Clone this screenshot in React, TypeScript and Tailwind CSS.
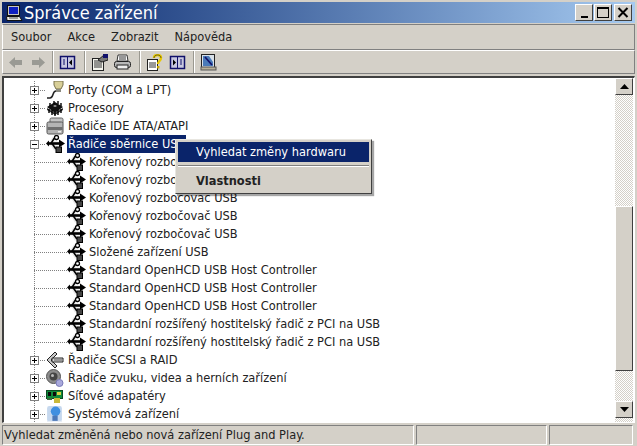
import type { ReactNode } from 'react';

type RowKind = 'port' | 'cpu' | 'ide' | 'usb' | 'scsi' | 'sound' | 'net' | 'sys';

const TOP_BEFORE: { kind: RowKind; label: string }[] = [
    { kind: 'port', label: 'Porty (COM a LPT)' },
    { kind: 'cpu', label: 'Procesory' },
    { kind: 'ide', label: 'Řadiče IDE ATA/ATAPI' },
];

const USB_CHILDREN = [
    'Kořenový rozbočovač USB',
    'Kořenový rozbočovač USB',
    'Kořenový rozbočovač USB',
    'Kořenový rozbočovač USB',
    'Kořenový rozbočovač USB',
    'Složené zařízení USB',
    'Standard OpenHCD USB Host Controller',
    'Standard OpenHCD USB Host Controller',
    'Standard OpenHCD USB Host Controller',
    'Standardní rozšířený hostitelský řadič z PCI na USB',
    'Standardní rozšířený hostitelský řadič z PCI na USB',
];

const TOP_AFTER: { kind: RowKind; label: string }[] = [
    { kind: 'scsi', label: 'Řadiče SCSI a RAID' },
    { kind: 'sound', label: 'Řadiče zvuku, videa a herních zařízení' },
    { kind: 'net', label: 'Síťové adapatéry' },
    { kind: 'sys', label: 'Systémová zařízení' },
];

function UsbIcon() {
    return (
        <svg width="19" height="18" viewBox="0 0 19 18" className="shrink-0">
            <path d="M1 8.5h4l3-5h3M5 8.5h10M6 8.5l3 5h3" fill="none" stroke="#e8e8e8" strokeWidth="4" />
            <path d="M2 8.5h12" stroke="#000" strokeWidth="2.6" />
            <path d="M5 8.5l3-5h2M6 8.5l3.5 5H12" fill="none" stroke="#000" strokeWidth="1.6" />
            <path d="M13 4.5l6 4-6 4z" fill="#000" />
            <path d="M0 8.5l3-3v6z" fill="#000" />
            <circle cx="10.5" cy="2.5" r="2" fill="#fff" stroke="#000" strokeWidth="1.3" />
            <rect x="10" y="12" width="5.5" height="5.5" fill="#444" stroke="#000" />
        </svg>
    );
}

function DeviceIcon({ kind }: { kind: RowKind }) {
    if (kind === 'usb') return <UsbIcon />;
    if (kind === 'port') {
        return (
            <svg width="18" height="18" viewBox="0 0 18 18" className="shrink-0">
                <path d="M1 17h3c4 0 2-7 6-7h2" fill="none" stroke="#222" strokeWidth="1.5" />
                <path d="M8 0h9v4l-2 4h-5L8 4z" fill="#d8cf98" stroke="#77714c" />
                <rect x="10" y="8" width="5" height="3" fill="#8a8a80" />
            </svg>
        );
    }
    if (kind === 'cpu') {
        return (
            <svg width="18" height="16" viewBox="0 0 18 16" className="shrink-0">
                <path d="M1 7l8-5 8 5-8 6z" fill="#111" />
                <path d="M1 8l8 5 8-5v2l-8 5-8-5z" fill="#333" />
                <path d="M3 9v4M6 10v5M9 12v4M12 10v5M15 9v4M4 3v3M8 1v3M12 1v3M15 3v3" stroke="#000" strokeWidth="1.4" />
                <path d="M7 6l2-1 2 1-2 1z" fill="#aaa" />
            </svg>
        );
    }
    if (kind === 'ide') {
        return (
            <svg width="18" height="18" viewBox="0 0 18 18" className="shrink-0">
                <rect x="4" y="1" width="13" height="6" rx="1.5" fill="#c4c4c4" stroke="#666" />
                <rect x="1" y="5" width="16" height="12" rx="1.5" fill="#b4b4b4" stroke="#555" />
                <rect x="1.5" y="10" width="15" height="3" fill="#6f6f6f" />
                <rect x="12" y="14" width="3" height="1.5" fill="#eee" />
            </svg>
        );
    }
    if (kind === 'scsi') {
        return (
            <svg width="18" height="18" viewBox="0 0 18 18" className="shrink-0">
                <path d="M9 1L1 9l8 8 2-2-6-6 6-6z" fill="#c8c8c8" stroke="#222" />
                <path d="M6 7h11v4H6z" fill="#d8d8d8" stroke="#222" />
                <path d="M8 9h8" stroke="#555" />
            </svg>
        );
    }
    if (kind === 'sound') {
        return (
            <svg width="18" height="18" viewBox="0 0 18 18" className="shrink-0">
                <circle cx="7.5" cy="7.5" r="7" fill="#8c8c8c" stroke="#555" />
                <circle cx="7.5" cy="7.5" r="4" fill="#444" />
                <circle cx="6.5" cy="6.5" r="1.5" fill="#bbb" />
                <circle cx="13.5" cy="14" r="3.5" fill="#a9a9dc" stroke="#7a7ab8" />
            </svg>
        );
    }
    if (kind === 'net') {
        return (
            <svg width="18" height="15" viewBox="0 0 18 15" className="shrink-0">
                <rect x="0.5" y="1.5" width="16" height="8" fill="#0e8a3a" stroke="#0a4a20" />
                <path d="M2 3h3v4H2zM7 3h3v4H7z" fill="#0a0a0a" />
                <rect x="11" y="3" width="4" height="3" fill="#d8d040" />
                <rect x="8" y="9" width="6" height="5" fill="#c9b93a" />
                <rect x="1" y="9" width="5" height="2" fill="#3a6a3a" />
            </svg>
        );
    }
    return (
        <svg width="17" height="18" viewBox="0 0 16 17" className="shrink-0">
            <rect x="1" y="1" width="14" height="15" rx="2" fill="#c6d8ee" />
            <circle cx="9" cy="6" r="4.5" fill="#3f8fe0" />
            <path d="M6 10h5v6H6z" fill="#4b78b8" />
            <path d="M1 15h14v1.5H1z" fill="#e8eef6" />
        </svg>
    );
}

// dotted tree lines plus the +/- box
function TreeGutter({ width, expander }: { width: number; expander?: '+' | '-' }) {
    return (
        <svg width={width} height="18" viewBox={`0 0 ${width} 18`} className="shrink-0">
            <path d="M30.5 0V18" stroke="#808080" strokeDasharray="1 1" />
            <path d={`M30 9.5H${width}`} stroke="#808080" strokeDasharray="1 1" />
            {expander && (
                <g>
                    <rect x="26.5" y="5.5" width="8" height="8" fill="#fff" stroke="#808080" />
                    <path d="M28 9.5h5" stroke="#000" />
                    {expander === '+' && <path d="M30.5 7v5" stroke="#000" />}
                </g>
            )}
        </svg>
    );
}

function TreeRow({ gutter, expander, icon, children }: { gutter: number; expander?: '+' | '-'; icon: ReactNode; children: ReactNode }) {
    return (
        <div className="flex h-[18px] shrink-0 items-center">
            <TreeGutter width={gutter} expander={expander} />
            <div className="flex w-[21px] shrink-0 items-center">{icon}</div>
            {children}
        </div>
    );
}

function TitleButton({ children }: { children: ReactNode }) {
    return (
        <div className="flex h-[17px] w-[18px] items-center justify-center border border-t-white border-l-white border-r-[#404040] border-b-[#404040] bg-[#d4d0c8]">
            {children}
        </div>
    );
}

function ToolSep() {
    return <div className="ml-[7px] mr-[5px] h-[22px] w-[2px] shrink-0 border-r border-r-white bg-[#9a9890]" />;
}

function ToolIcon({ children }: { children: ReactNode }) {
    return (
        <svg width="17" height="17" viewBox="0 0 17 17" className="shrink-0">
            {children}
        </svg>
    );
}

function ScrollButton({ children }: { children: ReactNode }) {
    return (
        <div className="flex h-[17px] w-[18px] shrink-0 items-center justify-center border border-t-white border-l-white border-r-[#404040] border-b-[#404040] bg-[#d4d0c8]">
            {children}
        </div>
    );
}

export default function App() {
    return (
        <div
            className="relative flex h-[446px] w-[637px] flex-col overflow-hidden bg-[#d4d0c8] pt-[2px] text-[12.7px] text-[#222]"
            style={{ fontFamily: '"DejaVu Sans Condensed", "DejaVu Sans", sans-serif' }}
        >
            {/* title bar */}
            <div className="mx-[2px] flex h-[21px] shrink-0 items-center bg-gradient-to-r from-[#0a246a] to-[#a6caf0] pl-[3px] pr-[3px]">
                <svg width="18" height="18" viewBox="0 0 18 18" className="shrink-0">
                    <rect x="2.5" y="1.5" width="12" height="10" fill="#c8c8c0" stroke="#111" />
                    <rect x="4" y="3" width="9" height="7" fill="#1020c0" />
                    <path d="M1.5 12.5h13l2.5 4H2z" fill="#e8e8e0" stroke="#111" />
                    <path d="M4 14h9" stroke="#555" />
                </svg>
                <span className="ml-px text-[18px] leading-none text-white">Správce zařízení</span>
                <div className="ml-auto flex items-center">
                    <TitleButton>
                        <div className="mt-[8px] h-[2px] w-[7px] bg-black" />
                    </TitleButton>
                    <div className="ml-px">
                        <TitleButton>
                            <div className="h-[11px] w-[12px] border border-t-2 border-black" />
                        </TitleButton>
                    </div>
                    <div className="ml-[2px]">
                        <TitleButton>
                            <svg width="12" height="11" viewBox="0 0 12 11">
                                <path d="M1.5 1l9 9M10.5 1l-9 9" stroke="#000" strokeWidth="2" />
                            </svg>
                        </TitleButton>
                    </div>
                </div>
            </div>

            {/* menu bar */}
            <div className="mx-[2px] mt-px flex h-[26px] shrink-0 items-center gap-[16px] border border-t-[#808080] border-l-white border-r-[#808080] border-b-[#808080] pl-[8px]">
                <span>Soubor</span>
                <span>Akce</span>
                <span>Zobrazit</span>
                <span>Nápověda</span>
            </div>

            {/* toolbar */}
            <div className="mx-[2px] flex h-[24px] shrink-0 items-center border-t border-t-white border-r border-r-[#808080] border-b border-b-[#808080] border-l border-l-white pl-[6px]">
                <svg width="13" height="11" viewBox="0 0 13 11" className="shrink-0">
                    <path d="M0 5.5L6 0v3h7v5H6v3z" fill="#9a9a94" />
                </svg>
                <svg width="13" height="11" viewBox="0 0 13 11" className="ml-[10px] shrink-0">
                    <path d="M13 5.5L7 0v3H0v5h7v3z" fill="#9a9a94" />
                </svg>
                <ToolSep />
                <ToolIcon>
                    <rect x="1.5" y="2.5" width="14" height="12" fill="#c8c8e0" stroke="#10106a" strokeWidth="1.5" />
                    <path d="M8.5 3v11" stroke="#10106a" />
                    <path d="M4 6h2M4 8h2M4 10h2" stroke="#10106a" />
                    <path d="M13 5.5v6l-3-3z" fill="#000" />
                </ToolIcon>
                <div className="w-px shrink-0" />
                <ToolSep />
                <ToolIcon>
                    <rect x="1.5" y="4.5" width="11" height="12" fill="#f4f4ec" stroke="#222" />
                    <path d="M3 7h8M3 9h8M3 11h8M3 13h8" stroke="#333" />
                    <path d="M7 6l6-5 4 0v5l-6 2z" fill="#777" stroke="#222" />
                    <rect x="12" y="0" width="5" height="4" fill="#10106a" />
                </ToolIcon>
                <div className="w-[6px] shrink-0" />
                <ToolIcon>
                    <path d="M4 1h9l1 6H3z" fill="#fff" stroke="#333" />
                    <rect x="0.5" y="7.5" width="16" height="6" rx="2" fill="#b8b8b8" stroke="#222" />
                    <rect x="3" y="11" width="11" height="4" fill="#eee" stroke="#222" />
                    <path d="M5 3h7M5 5h7" stroke="#333" />
                </ToolIcon>
                <div className="w-px shrink-0" />
                <ToolSep />
                <ToolIcon>
                    <rect x="1.5" y="5.5" width="10" height="11" fill="#fff" stroke="#222" />
                    <path d="M3 9h7M3 11h7M3 13h7" stroke="#333" />
                    <path d="M8 4c0-4 7-4 7 0 0 3-3 3-3 6" fill="none" stroke="#e8c800" strokeWidth="2.4" />
                    <path d="M8 4c0-4 7-4 7 0" fill="none" stroke="#222" strokeWidth="0.6" />
                    <rect x="11" y="12" width="2.4" height="2.4" fill="#c8a800" />
                </ToolIcon>
                <div className="w-[6px] shrink-0" />
                <ToolIcon>
                    <rect x="1.5" y="2.5" width="14" height="12" fill="#c8c8e0" stroke="#10106a" strokeWidth="1.5" />
                    <path d="M8.5 3v11" stroke="#10106a" />
                    <path d="M11 6h2M11 8h2M11 10h2" stroke="#10106a" />
                    <path d="M4 5.5v6l3-3z" fill="#000" />
                </ToolIcon>
                <ToolSep />
                <ToolIcon>
                    <rect x="1.5" y="0.5" width="13" height="13" fill="#d8e0e8" stroke="#222" />
                    <path d="M3 2h6l4 6v4H3z" fill="#4a7ab8" />
                    <path d="M5 3l7 8" stroke="#10106a" strokeWidth="1.6" />
                    <rect x="1" y="13" width="15" height="3" fill="#b8b098" stroke="#555" />
                </ToolIcon>
            </div>

            {/* tree + scrollbar */}
            <div className="mx-[2px] mt-[2px] flex min-h-0 flex-1 border border-t-2 border-t-[#404040] border-l-2 border-l-[#404040] border-r-white border-b-white bg-white">
                <div className="min-w-0 flex-1 overflow-hidden pt-[3px]">
                    {TOP_BEFORE.map((row) => (
                        <TreeRow key={row.label} gutter={42} expander="+" icon={<DeviceIcon kind={row.kind} />}>
                            <span className="pl-px">{row.label}</span>
                        </TreeRow>
                    ))}
                    <TreeRow gutter={42} expander="-" icon={<DeviceIcon kind="usb" />}>
                        <span className="bg-[#0a246a] px-px leading-[18px] text-white">Řadiče sběrnice USB</span>
                    </TreeRow>
                    {USB_CHILDREN.map((label, i) => (
                        <TreeRow key={i} gutter={63} icon={<UsbIcon />}>
                            <span className="whitespace-nowrap pl-px">{label}</span>
                        </TreeRow>
                    ))}
                    {TOP_AFTER.map((row) => (
                        <TreeRow key={row.label} gutter={42} expander="+" icon={<DeviceIcon kind={row.kind} />}>
                            <span className="pl-px">{row.label}</span>
                        </TreeRow>
                    ))}
                </div>
                <div className="mr-px flex w-[18px] shrink-0 flex-col bg-[image:repeating-conic-gradient(#d4d0c8_0_25%,#ffffff_0_50%)] bg-[length:2px_2px]">
                    <ScrollButton>
                        <svg width="9" height="5" viewBox="0 0 9 5">
                            <path d="M4.5 0L9 5H0z" fill="#000" />
                        </svg>
                    </ScrollButton>
                    <div className="mt-[111px] h-[165px] w-[18px] shrink-0 border border-t-white border-l-white border-r-[#404040] border-b-[#404040] bg-[#d4d0c8]" />
                    <div className="mt-auto mb-[4px]">
                        <ScrollButton>
                            <svg width="9" height="5" viewBox="0 0 9 5">
                                <path d="M4.5 5L9 0H0z" fill="#000" />
                            </svg>
                        </ScrollButton>
                    </div>
                </div>
            </div>

            {/* status bar */}
            <div className="mx-[2px] mt-[2px] flex h-[21px] shrink-0 gap-[2px] pb-px">
                <div className="flex w-[412px] items-center overflow-hidden border border-t-[#808080] border-l-[#808080] border-r-white border-b-white pl-px">
                    Vyhledat změněná nebo nová zařízení Plug and Play.
                </div>
                <div className="w-[131px] border border-t-[#808080] border-l-[#808080] border-r-white border-b-white" />
                <div className="w-[84px] border border-t-[#808080] border-l-[#808080] border-r-white border-b-white" />
            </div>

            {/* context menu */}
            <div className="absolute left-[175px] top-[139px] w-[197px] border border-t-[#e8e6e0] border-l-[#e8e6e0] border-r-[#404040] border-b-[#404040] bg-[#d4d0c8] p-[2px] shadow-[2px_2px_1px_rgba(0,0,0,0.35)]">
                <div className="flex h-[20px] items-center bg-[#0a246a] pl-[18px] text-white">Vyhledat změny hardwaru</div>
                <div className="my-[3px] border-t border-t-[#808080] border-b border-b-white" />
                <div className="flex h-[21px] items-center pl-[18px] font-bold">Vlastnosti</div>
            </div>
        </div>
    );
}
